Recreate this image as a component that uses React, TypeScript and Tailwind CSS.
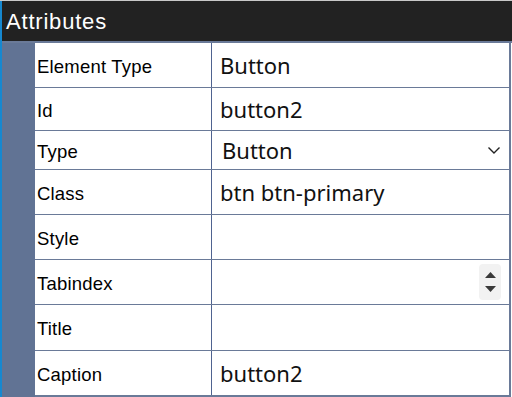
import { FC } from 'react';

type Row = { label: string; value?: string; kind?: 'select' | 'number'; h: string };

const rows: Row[] = [
  { label: 'Element Type', value: 'Button', h: 'h-[44px]' },
  { label: 'Id', value: 'button2', h: 'h-[43px]' },
  { label: 'Type', value: 'Button', kind: 'select', h: 'h-[39px]' },
  { label: 'Class', value: 'btn btn-primary', h: 'h-[45px]' },
  { label: 'Style', h: 'h-[45px]' },
  { label: 'Tabindex', kind: 'number', h: 'h-[45px]' },
  { label: 'Title', h: 'h-[46px]' },
  { label: 'Caption', value: 'button2', h: 'h-[45px]' },
];

const Chevron = () => (
  <svg width="14" height="9" viewBox="0 0 14 9" fill="none" stroke="#222" strokeWidth="1.4">
    <path d="M1.5 1.5 7 7l5.5-5.5" />
  </svg>
);

const Spinner = () => (
  <div className="flex flex-col items-center justify-center gap-[8px] w-[22px] h-[36px] bg-[#f2f2f2] rounded-sm">
    <svg width="11" height="6" viewBox="0 0 11 6"><path d="M5.5 0 11 6H0z" fill="#3a3a3a" /></svg>
    <svg width="11" height="6" viewBox="0 0 11 6"><path d="M0 0h11L5.5 6z" fill="#3a3a3a" /></svg>
  </div>
);

const App: FC = () => {
  return (
    <div className="w-[512px] h-[397px] bg-white border-t border-[#c9c9c9] flex overflow-hidden">
      <div className="w-[2px] bg-[#1688d0]" />
      <div className="flex-1 flex flex-col">
        <div className="h-[41px] bg-[#222222] flex items-center px-[4px] pt-[1px]">
          <span className="text-white text-[22px] tracking-[0.8px] font-['Liberation_Sans',Arial,sans-serif]">Attributes</span>
        </div>
        <div className="flex flex-1 border-t-2 border-[#6a7a98]">
          <div className="w-[33px] bg-[#617394]" />
          <div className="w-[476px] border-r-2 border-b-2 border-[#6a7a98] flex flex-col">
            {rows.map((r, i) => (
              <div
                key={r.label}
                className={`flex ${r.h} ${i > 0 ? 'border-t border-[#6a7a98]' : ''}`}
              >
                <div className="w-[177px] border-r border-[#4f6390] flex items-center pl-[2px] pt-[3px] text-[18.5px] tracking-[0.2px] text-black font-['Liberation_Sans',Arial,sans-serif]">
                  {r.label}
                </div>
                <div className="flex-1 flex items-center pl-[8px] pr-[8px] text-[22px] text-[#111] font-['Noto_Sans','Open_Sans',sans-serif]">
                  <span className={`flex-1 ${r.kind === 'select' ? 'pl-[2px]' : ''}`}>{r.value}</span>
                  {r.kind === 'select' && <Chevron />}
                  {r.kind === 'number' && <Spinner />}
                </div>
              </div>
            ))}
          </div>
        </div>
      </div>
    </div>
  );
};

export default App;
